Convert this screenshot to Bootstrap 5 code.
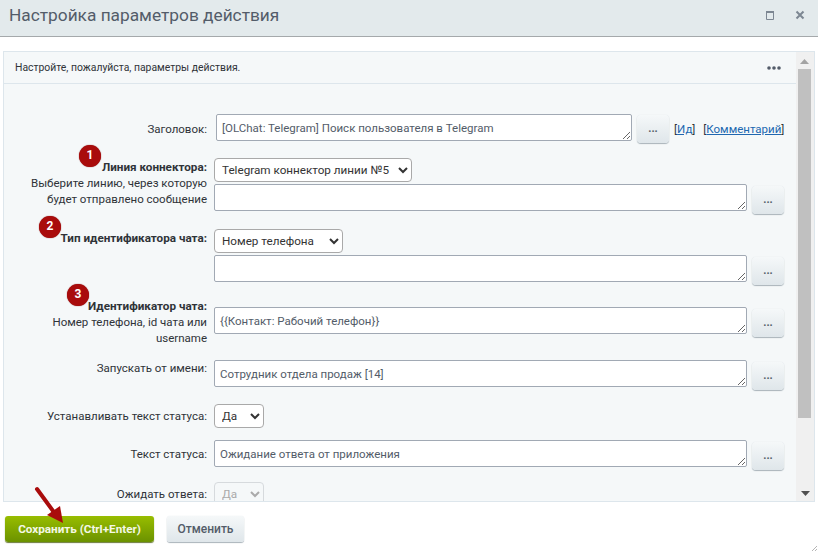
<!DOCTYPE html>
<html lang="ru">

<head>
   <meta charset="UTF-8">
   <title>Настройка параметров действия</title>
   <link href="https://cdn.jsdelivr.net/npm/bootstrap@5.3.0/dist/css/bootstrap.min.css" rel="stylesheet">
   <style>
      html, body { height: 100%; overflow: hidden; }
      body { background: #fff; color: #2f3338; font: 11.5px/16px Roboto, "Noto Sans", sans-serif; }
      .win { position: relative; width: 818px; height: 551px; overflow: hidden; }
      .win-head { height: 37px; background: #e3eaec; border-bottom: 1px solid #a5a9ab; padding: 0 13px 6px 9px; }
      .win-title { font-size: 17.300px; line-height: 30px; color: #535c69; }
      .panel-box { margin: 14px 3px 0; height: 451px; background: #f5f8f9; border: 1px solid #dde6ec; }
      .panel-main { width: 793px; min-width: 0; }
      .panel-head { height: 32px; border-bottom: 1px solid #dde6ec; padding: 1px 15px 0 11px; font-size: 10.400px; flex: none; }
      .panel-scroll { height: 417px; overflow: hidden; padding-top: 30px; }
      .sbar { width: 18px; background: #f0f0f0; flex: none; }
      .sbar-thumb { width: 13px; height: 349px; background: #c0c0c0; margin: 17px 0 0 2px; }
      .sbar-down { margin: auto 0 5px 5px; }
      .form-line { display: flex; }
      .form-line + .form-line { margin-top: 15px; }
      .form-line.tight { margin-top: 13px; }
      .form-line.snug { margin-top: 14px; }
      .form-line.last { margin-top: 12px; }
      .line-label { width: 203px; margin-right: 7px; text-align: right; flex: none; }
      .line-label b { font-weight: 700; font-size: 11.700px; }
      .pt1 { padding-top: 1px; } .pt4 { padding-top: 4px; } .pt6 { padding-top: 6px; } .pt7 { padding-top: 7px; }
      .pt9 { padding-top: 9px; }
      .field-row { display: flex; align-items: flex-start; }
      .form-control.field-text { width: 533px; height: 27px; min-height: 27px; padding: 5px 5px 3px; font: inherit; color: #535c69;
         background: #fff; border: 1px solid #a1a9b4; border-radius: 2px; box-shadow: none; overflow: hidden; }
      .form-control.field-short { width: 416px; margin-left: 2px; }
      .form-select.field-pick { display: block; height: 24px; padding: 2px 2px 2px 3px; font: inherit; font-size: 11.700px; color: #333; background-color: #fff;
         background-image: none; appearance: auto; border: 1px solid #a9a9a9; border-radius: 4px; box-shadow: none; }
      .form-select.field-pick:disabled { color: #aaa; background-color: #f5f8f9; border-color: #d6dadd; opacity: 1; }
      .w-line { width: 198px; margin-bottom: 2px; }
      .w-type { width: 129px; margin-bottom: 2px; }
      .w-yes { width: 50px; }
      .dots-btn { width: 32px; height: 28px; margin: 2px 0 0 5px; padding: 0 0 2px; font: 700 11px/1 Roboto, sans-serif; color: #535c69;
         background: linear-gradient(#f5f8f9, #dfe6ea); border: 0; border-radius: 4px; box-shadow: 0 1px 1px #a9b3ba, 0 0 1px #d5dde2; }
      .dots-btn.near { margin-top: 1px; }
      .side-links { margin: 7px 0 0 5px; white-space: nowrap; }
      .side-links a { color: #2067b0; }
      .side-links span + span { margin-left: 5px; }
      .foot-bar { padding: 14px 0 0 5px; gap: 13px; }
      .btn.save-btn, .btn.cancel-btn { height: 26px; padding: 0; font: 700 11.700px/26px Roboto, sans-serif; border: 0; border-radius: 3px; }
      .btn.save-btn { width: 149px; color: #f4f8e6; background: linear-gradient(#98bd00, #6b9200); box-shadow: 0 1px 1px #6c7a3a; }
      .btn.cancel-btn { width: 77px; font-weight: 500; font-size: 12px; color: #535c69; background: linear-gradient(#f5f8f9, #dfe6ea); box-shadow: 0 1px 1px #a9b3ba, 0 0 1px #d5dde2; }
      .step-dot { position: absolute; width: 22px; height: 22px; line-height: 21px; text-align: center; color: #fff; font-weight: 700;
         font-size: 12px; background: #a90c0c; box-shadow: 0 0 1px #700; }
      .over-art { position: absolute; }
   </style>
</head>

<body>
   <div class="win">
      <div class="win-head d-flex justify-content-between align-items-center">
         <div class="win-title">Настройка параметров действия</div>
         <div class="d-flex align-items-center gap-3">
            <svg width="9" height="9" viewBox="0 0 9 9"><path d="M.5 1.5h7v7h-7z" fill="none" stroke="#7d8792"/><path d="M0 1h8" stroke="#7d8792" stroke-width="2"/></svg>
            <svg class="ms-1" width="10" height="10" viewBox="0 0 10 10"><path d="M1.5 1.5l7 7M8.500 1.500l-7 7" stroke="#7d8792" stroke-width="2"/></svg>
         </div>
      </div>

      <div class="panel-box d-flex">
         <div class="panel-main d-flex flex-column">
            <div class="panel-head d-flex justify-content-between align-items-center">
               <span>Настройте, пожалуйста, параметры действия.</span>
               <svg width="14" height="4" viewBox="0 0 14 4" fill="#535c69"><circle cx="2" cy="2" r="1.800"/><circle cx="7" cy="2" r="1.800"/><circle cx="12" cy="2" r="1.800"/></svg>
            </div>
            <div class="panel-scroll">
               <div class="form-line">
                  <div class="line-label pt7">Заголовок:</div>
                  <div class="field-row">
                     <textarea class="form-control field-text field-short">[OLChat: Telegram] Поиск пользователя в Telegram</textarea>
                     <button class="dots-btn near" type="button">...</button>
                     <div class="side-links"><span>[<a href="#">Ид</a>]</span> <span>[<a href="#">Комментарий</a>]</span></div>
                  </div>
               </div>

               <div class="form-line">
                  <div class="line-label pt1"><b>Линия коннектора:</b><br>Выберите линию, через которую будет отправлено сообщение</div>
                  <div>
                     <select class="form-select field-pick w-line"><option>Telegram коннектор линии №5</option></select>
                     <div class="field-row">
                        <textarea class="form-control field-text"></textarea>
                        <button class="dots-btn" type="button">...</button>
                     </div>
                  </div>
               </div>

               <div class="form-line">
                  <div class="line-label pt1"><b>Тип идентификатора чата:</b></div>
                  <div>
                     <select class="form-select field-pick w-type"><option>Номер телефона</option></select>
                     <div class="field-row">
                        <textarea class="form-control field-text"></textarea>
                        <button class="dots-btn" type="button">...</button>
                     </div>
                  </div>
               </div>

               <div class="form-line tight">
                  <div class="line-label"><b>Идентификатор чата:</b><br>Номер телефона, id чата или username</div>
                  <div class="field-row pt9">
                     <textarea class="form-control field-text">{{Контакт: Рабочий телефон}}</textarea>
                     <button class="dots-btn" type="button">...</button>
                  </div>
               </div>

               <div class="form-line snug">
                  <div class="line-label">Запускать от имени:</div>
                  <div class="field-row">
                     <textarea class="form-control field-text">Сотрудник отдела продаж [14]</textarea>
                     <button class="dots-btn" type="button">...</button>
                  </div>
               </div>

               <div class="form-line snug">
                  <div class="line-label pt4">Устанавливать текст статуса:</div>
                  <select class="form-select field-pick w-yes"><option>Да</option></select>
               </div>

               <div class="form-line last">
                  <div class="line-label pt6">Текст статуса:</div>
                  <div class="field-row">
                     <textarea class="form-control field-text">Ожидание ответа от приложения</textarea>
                     <button class="dots-btn" type="button">...</button>
                  </div>
               </div>

               <div class="form-line last">
                  <div class="line-label pt4">Ожидать ответа:</div>
                  <select class="form-select field-pick w-yes" disabled><option>Да</option></select>
               </div>
            </div>
         </div>
         <div class="sbar d-flex flex-column position-relative">
            <svg class="over-art" style="left:4px;top:7px" width="9" height="5" viewBox="0 0 9 5"><path d="M4.500 0L9 5H0z" fill="#a3a3a3"/></svg>
            <div class="sbar-thumb"></div>
            <svg class="sbar-down" width="9" height="5" viewBox="0 0 9 5"><path d="M0 0h9L4.500 5z" fill="#505050"/></svg>
         </div>
      </div>

      <div class="foot-bar d-flex">
         <button class="btn save-btn" type="button">Сохранить (Ctrl+Enter)</button>
         <button class="btn cancel-btn" type="button">Отменить</button>
      </div>

      <div class="step-dot rounded-circle" style="left:79px;top:145px">1</div>
      <div class="step-dot rounded-circle" style="left:39px;top:216px">2</div>
      <div class="step-dot rounded-circle" style="left:67px;top:284px">3</div>
      <svg class="over-art" style="left:34px;top:486px" width="32" height="40" viewBox="0 0 32 40">
         <path d="M3 3L22 29" stroke="#a90c0c" stroke-width="4" stroke-linecap="round"/>
         <path d="M29 37L13 29l13-9z" fill="#a90c0c"/>
      </svg>
      <svg class="over-art" style="left:812px;top:546px" width="5" height="5" viewBox="0 0 5 5"><path d="M0 5L5 0M3 5l2-2" stroke="#b5b5b5"/></svg>
   </div>
</body>

</html>
